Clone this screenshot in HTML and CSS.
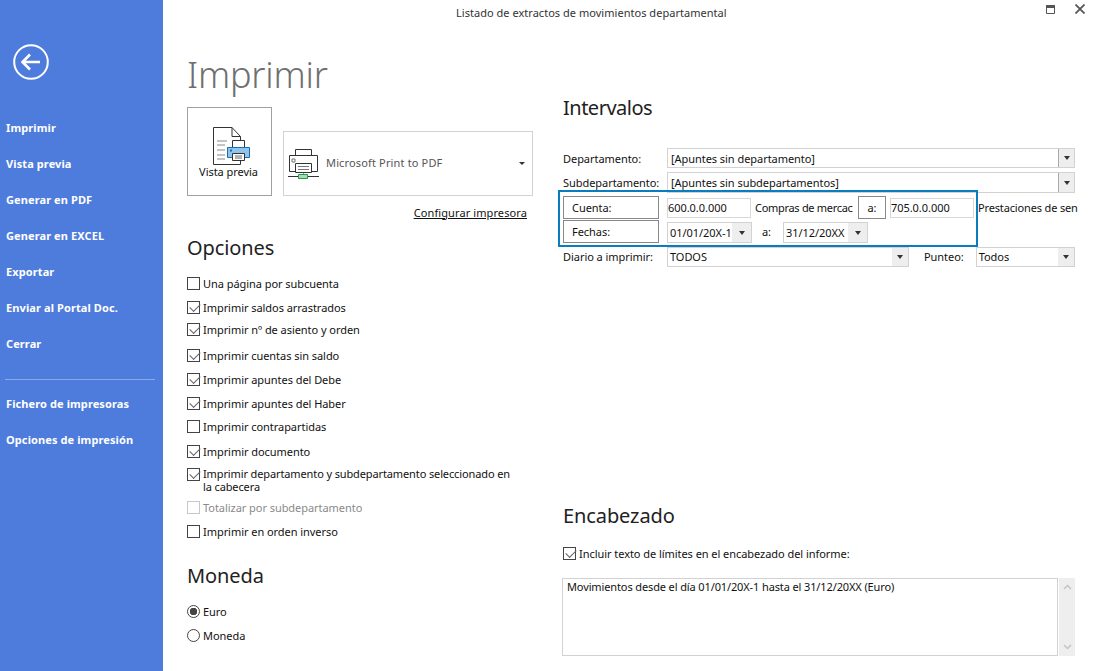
FILE: index.html
```html
<!DOCTYPE html>
<html lang="es">
<head>
  <meta charset="UTF-8">
  <title>Listado de extractos de movimientos departamental</title>
  <link rel="stylesheet" href="styles.css">
</head>
<body>
  <aside class="sidebar">
    <svg class="back" width="36" height="36" viewBox="0 0 36 36">
      <circle cx="18" cy="18" r="16.8" fill="none" stroke="#fff" stroke-width="2"/>
      <path d="M9 18H27M17 10.500L9.500 18L17 25.500" fill="none" stroke="#fff" stroke-width="2.600"/>
    </svg>
    <nav class="menu">
      <a>Imprimir</a>
      <a>Vista previa</a>
      <a>Generar en PDF</a>
      <a>Generar en EXCEL</a>
      <a>Exportar</a>
      <a>Enviar al Portal Doc.</a>
      <a>Cerrar</a>
      <hr>
      <a>Fichero de impresoras</a>
      <a>Opciones de impresión</a>
    </nav>
  </aside>

  <main class="main">
    <header class="titlebar">
      <span class="title">Listado de extractos de movimientos departamental</span>
      <div class="win-buttons">
        <svg width="9" height="9" viewBox="0 0 9 9"><path d="M.5.5H8.500V8.500H.5Z" fill="none" stroke="#555"/><path d="M0 0H9V3H0Z" fill="#555"/></svg>
        <svg width="10" height="10" viewBox="0 0 10 10"><path d="M.5.5L9.500 9.500M9.500.5L.5 9.500" fill="none" stroke="#555" stroke-width="1.800"/></svg>
      </div>
    </header>

    <div class="columns">
      <section class="col-left">
        <h1>Imprimir</h1>
        <div class="print-row">
          <div class="preview-btn">
            <svg width="38" height="38" viewBox="0 0 38 38">
              <path d="M.5.5H19L27.500 9.500V37.500H.5Z" fill="#fff" stroke="#333"/>
              <path d="M19 .5V9.500H27.500" fill="none" stroke="#333"/>
              <path d="M4 14H14M4 18H12M4 23H12M4 28H12M4 32H12" stroke="#888"/>
              <path d="M19.500 13.500H31.500V20.500H19.500Z" fill="#fff" stroke="#333"/>
              <path d="M14.500 20.500H36.500V30.500H14.500Z" fill="#8fc4ec" stroke="#1b6db0"/>
              <path d="M17 22.500H19V24.500H17Z" fill="#1b6db0"/>
              <path d="M19.500 26.500H31.500V33.500H19.500Z" fill="#fff" stroke="#333"/>
              <path d="M22 29H29M22 31H29" stroke="#666"/>
            </svg>
            <span>Vista previa</span>
          </div>
          <div class="printer-select">
            <svg width="31" height="30" viewBox="0 0 31 30">
              <path d="M7.500.5H23.500V6.500H7.500Z" fill="#fff" stroke="#333"/>
              <path d="M1.500 6.500H29.500V22.500H1.500Z" fill="#fff" stroke="#333"/>
              <path d="M4 10H7V13H4Z" fill="none" stroke="#777"/>
              <path d="M7.500 14.500H23.500V23.500H7.500Z" fill="#fff" stroke="#333"/>
              <path d="M10 17.500H21M10 20.500H21" stroke="#777"/>
              <path d="M15.500 24V26" stroke="#999"/>
              <path d="M0 27.500H31" stroke="#333"/>
              <path d="M10.500 25.500H19.500V29.500H10.500Z" fill="#a8dbae" stroke="#1e9e4e"/>
            </svg>
            <span class="printer-name">Microsoft Print to PDF</span>
            <i class="caret caret-small"></i>
          </div>
        </div>
        <div class="config-row"><a class="config-link">Configurar impresora</a></div>

        <h2 class="h-opciones">Opciones</h2>
        <div class="options">
          <label class="opt"><i class="check"></i>Una página por subcuenta</label>
          <label class="opt"><i class="check on"></i>Imprimir saldos arrastrados</label>
          <label class="opt up-2"><i class="check on"></i>Imprimir nº de asiento y orden</label>
          <label class="opt down-2"><i class="check on"></i>Imprimir cuentas sin saldo</label>
          <label class="opt"><i class="check on"></i>Imprimir apuntes del Debe</label>
          <label class="opt"><i class="check on"></i>Imprimir apuntes del Haber</label>
          <label class="opt up-1"><i class="check"></i>Imprimir contrapartidas</label>
          <label class="opt down-1"><i class="check on"></i>Imprimir documento</label>
          <label class="opt opt-wrap"><i class="check on"></i><span>Imprimir departamento y subdepartamento seleccionado en la cabecera</span></label>
          <label class="opt disabled down-2"><i class="check"></i>Totalizar por subdepartamento</label>
          <label class="opt"><i class="check"></i>Imprimir en orden inverso</label>
        </div>

        <h2 class="h-moneda">Moneda</h2>
        <div class="radios">
          <label class="opt"><i class="radio on"></i>Euro</label>
          <label class="opt"><i class="radio"></i>Moneda</label>
        </div>
      </section>

      <section class="col-right">
        <h2 class="h-intervalos">Intervalos</h2>
        <div class="form">
          <div class="row row-dep">
            <span class="lbl">Departamento:</span>
            <div class="combo grow"><span class="val">[Apuntes sin departamento]</span><b class="arrow dark"><i class="caret"></i></b></div>
          </div>
          <div class="row row-sub">
            <span class="lbl">Subdepartamento:</span>
            <div class="combo grow"><span class="val">[Apuntes sin subdepartamentos]</span><b class="arrow dark"><i class="caret"></i></b></div>
          </div>
          <div class="range">
            <div class="row row-range">
              <span class="tag tag-main">Cuenta:</span>
              <div class="field">600.0.0.000</div>
              <span class="desc desc-from">Compras de mercac</span>
              <span class="tag tag-a">a:</span>
              <div class="field">705.0.0.000</div>
              <span class="desc desc-to">Prestaciones de sen</span>
            </div>
            <div class="row row-range row-dates">
              <span class="tag tag-main">Fechas:</span>
              <div class="combo date-from"><span class="val">01/01/20X-1</span><b class="arrow"><i class="caret"></i></b></div>
              <span class="date-a">a:</span>
              <div class="combo date-to"><span class="val">31/12/20XX</span><b class="arrow"><i class="caret"></i></b></div>
            </div>
          </div>
          <div class="row row-diario">
            <span class="lbl">Diario a imprimir:</span>
            <div class="combo diario"><span class="val">TODOS</span><b class="arrow"><i class="caret"></i></b></div>
            <span class="punteo">Punteo:</span>
            <div class="combo grow"><span class="val">Todos</span><b class="arrow"><i class="caret"></i></b></div>
          </div>
        </div>

        <h2 class="h-encabezado">Encabezado</h2>
        <label class="opt limits"><i class="check on"></i>Incluir texto de límites en el encabezado del informe:</label>
        <div class="memo">
          <div class="memo-text">Movimientos desde el día 01/01/20X-1 hasta el 31/12/20XX (Euro)</div>
          <div class="scrollbar">
            <svg width="9" height="6" viewBox="0 0 9 6"><path d="M1 5L4.500 1.500L8 5" fill="none" stroke="#c4c4c4" stroke-width="1.500"/></svg>
            <svg width="9" height="6" viewBox="0 0 9 6"><path d="M1 1L4.500 4.500L8 1" fill="none" stroke="#c4c4c4" stroke-width="1.500"/></svg>
          </div>
        </div>
      </section>
    </div>
  </main>
</body>
</html>
```

FILE: styles.css
```css
* {
  box-sizing: border-box;
}
html, body {
  height: 100%;
}
body {
  margin: 0;
  display: flex;
  overflow: hidden;
  background: #fff;
  color: #111;
  font-family: "Noto Sans", "Open Sans", sans-serif;
  font-size: 11px;
  letter-spacing: -0.05px;
}

/* sidebar */
.sidebar {
  width: 163px;
  flex: none;
  background: #4e7cdc;
  color: #fff;
}
.back {
  display: block;
  margin: 44px 0 0 13px;
}
.menu {
  margin-top: 30px;
  display: flex;
  flex-direction: column;
}
.menu a {
  height: 36px;
  line-height: 36px;
  padding-left: 6px;
  font-weight: 700;
  font-size: 11px;
  letter-spacing: 0.1px;
}
.menu hr {
  width: 150px;
  height: 1px;
  margin: 17px 0 6px 5px;
  border: 0;
  background: #8aa8ea;
}

/* title bar */
.main {
  flex: 1;
  min-width: 0;
}
.titlebar {
  height: 26px;
  display: flex;
  align-items: center;
  justify-content: space-between;
  padding: 0 9px 0 293px;
  color: #333;
}
.title {
  margin-bottom: 2px;
  letter-spacing: 0.03px;
}
.win-buttons {
  display: flex;
  align-items: flex-end;
  gap: 20px;
  margin-bottom: 8px;
}
.win-buttons svg {
  display: block;
}

/* columns */
.columns {
  display: flex;
  padding-left: 24px;
  gap: 30px;
}
.col-left {
  width: 346px;
  flex: none;
}
.col-right {
  width: 512px;
  flex: none;
}
h1 {
  margin: 27px 0 10px;
  font-size: 36px;
  line-height: 44px;
  font-weight: 300;
  color: #6f6f6f;
  letter-spacing: -0.2px;
}
h2 {
  margin: 0;
  font-size: 20px;
  line-height: 28px;
  font-weight: 400;
  color: #222;
  letter-spacing: -0.1px;
}

/* printer */
.print-row {
  display: flex;
  align-items: flex-end;
  gap: 11px;
}
.preview-btn {
  width: 85px;
  height: 89px;
  border: 1px solid #a0a0a0;
  display: flex;
  flex-direction: column;
  align-items: center;
  padding-top: 19px;
}
.preview-btn svg {
  display: block;
  margin-left: 5px;
}
.preview-btn span {
  margin: -1px 0 0 -2px;
  line-height: 16px;
}
.printer-select {
  width: 250px;
  height: 65px;
  border: 1px solid #d2d2d2;
  display: flex;
  align-items: center;
  padding: 0 7px 0 4px;
}
.printer-name {
  margin: 0 0 2px 7px;
  flex: 1;
  font-size: 11px;
  letter-spacing: 0.15px;
  color: #555;
}
.config-row {
  width: 340px;
  height: 28px;
  padding-top: 4px;
  display: flex;
  justify-content: flex-end;
  align-items: center;
}
.config-link {
  color: #111;
  text-decoration: underline;
  font-size: 11px;
  letter-spacing: 0.1px;
}
.h-opciones {
  margin-top: 10px;
}

/* checkboxes */
.options {
  margin-top: 9px;
}
.opt {
  display: flex;
  align-items: center;
  height: 24px;
  gap: 3px;
}
.up-2 {
  margin-top: -2px;
}
.down-2 {
  margin-top: 2px;
}
.up-1 {
  margin-top: -1px;
}
.down-1 {
  margin-top: 1px;
}
.opt-wrap {
  height: 26px;
  margin-top: 4px;
  align-items: flex-start;
  line-height: 13px;
  letter-spacing: -0.12px;
}
.opt-wrap span {
  width: 312px;
}
.opt-wrap .check {
  margin-top: 1px;
}
.disabled {
  color: #8a8a8a;
}
.disabled .check {
  border-color: #c8c8c8;
}
.check {
  position: relative;
  flex: none;
  width: 13px;
  height: 13px;
  border: 1px solid #444;
}
.check.on::after {
  content: "";
  position: absolute;
  left: 2px;
  top: 0;
  width: 9px;
  height: 5px;
  border-left: 1.500px solid #666;
  border-bottom: 1.500px solid #666;
  transform: rotate(-45deg) translate(-1px, 1px);
}
.radio {
  flex: none;
  width: 13px;
  height: 13px;
  border: 1px solid #444;
  border-radius: 50%;
}
.radio.on {
  background: radial-gradient(circle, #444 0 3.500px, #fff 4px);
}
.h-moneda {
  margin-top: 19px;
}
.radios {
  margin-top: 9px;
}

/* right side form */
.h-intervalos {
  margin-top: 68px;
  letter-spacing: -0.5px;
}
.form {
  margin-top: 26px;
}
.row {
  display: flex;
  align-items: center;
}
.row-dep {
  height: 20px;
}
.row-sub {
  height: 21px;
  margin-top: 4px;
}
.row-diario {
  height: 20px;
  margin-top: 4px;
}
.row-diario .lbl, .row-diario .val, .row-diario .punteo {
  padding-bottom: 2px;
}
.row-diario .val {
  padding-left: 2px;
}
.lbl {
  width: 104px;
  flex: none;
  white-space: nowrap;
}
.combo {
  display: flex;
  align-self: stretch;
  align-items: center;
  min-width: 0;
  border: 1px solid #d2d2d2;
}
.grow {
  flex: 1;
}
.val {
  flex: 1;
  padding-left: 3px;
  white-space: nowrap;
}
.arrow {
  width: 16px;
  flex: none;
  align-self: stretch;
  display: flex;
  align-items: center;
  justify-content: center;
  background: #eee;
}
.arrow.dark {
  border-left: 1px solid #aaa;
}
.caret {
  width: 0;
  height: 0;
  border: 3px solid transparent;
  border-top: 4px solid #333;
  border-bottom: 0;
}
.caret-small {
  border-width: 3px 3px 0;
}

/* range group with the blue frame */
.range {
  position: relative;
  margin-top: 3px;
}
.range::after {
  content: "";
  position: absolute;
  left: -5px;
  top: -6px;
  width: 416px;
  height: 53px;
  border: 2px solid #0a7cc0;
  pointer-events: none;
}
.row-range {
  height: 23px;
}
.row-dates {
  margin-top: 1px;
}
.tag {
  flex: none;
  height: 23px;
  line-height: 21px;
  border: 1px solid #888;
}
.tag-main {
  width: 96px;
  padding-left: 8px;
  margin-right: 8px;
}
.tag-a {
  width: 28px;
  text-align: center;
}
.field {
  flex: none;
  width: 84px;
  height: 20px;
  line-height: 18px;
  padding-left: 0;
  border: 1px solid #d8d8d8;
}
.desc {
  flex: none;
  white-space: nowrap;
}
.desc-from {
  width: 97px;
  margin: 0 6px 0 4px;
  letter-spacing: -0.3px;
}
.tag-a + .field {
  margin-left: 4px;
}
.desc-to {
  width: 99px;
  margin-left: 4px;
  letter-spacing: -0.15px;
}
.row-dates .combo {
  height: 21px;
  align-self: auto;
  margin-top: 2px;
}
.date-from {
  width: 85px;
}
.date-from .arrow {
  width: 19px;
}
.date-from .val, .date-to .val {
  padding-left: 2px;
}
.date-a {
  width: 31px;
  padding-left: 10px;
  flex: none;
}
.date-to {
  width: 85px;
}
.date-to .arrow {
  width: 19px;
}
.diario {
  width: 242px;
}
.punteo {
  margin: 0 12px 0 15px;
}

/* encabezado */
.h-encabezado {
  margin-top: 235px;
}
.limits {
  margin-top: 11px;
}
.memo {
  display: flex;
  height: 78px;
  margin-top: 13px;
  margin-left: -1px;
  gap: 1px;
  width: 513px;
}
.memo-text {
  flex: 1;
  border: 1px solid #d2d2d2;
  padding: 0 4px;
  letter-spacing: -0.12px;
}
.scrollbar {
  width: 16px;
  background: #eee;
  display: flex;
  flex-direction: column;
  align-items: center;
  justify-content: space-between;
  padding: 6px 0;
}
.scrollbar svg {
  display: block;
}
```
